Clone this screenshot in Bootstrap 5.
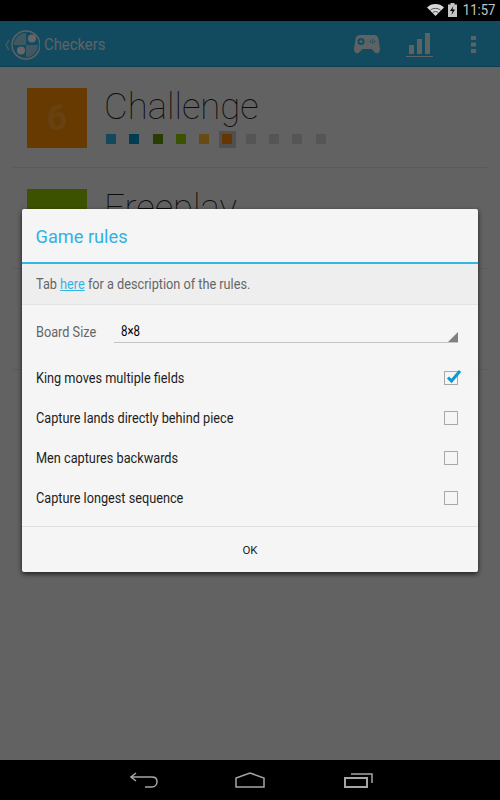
<!DOCTYPE html>
<html lang="en">
<head>
    <meta charset="UTF-8">
    <meta name="viewport" content="width=device-width, initial-scale=1.0">
    <title>Checkers</title>
    <link href="https://cdn.jsdelivr.net/npm/bootstrap@5.3.0/dist/css/bootstrap.min.css" rel="stylesheet">
    <style>
        html, body { height: 100%; }
        body { font-family: Roboto, "Liberation Sans", sans-serif; background: #000; overflow: hidden; }
        .app-shell { width: 500px; height: 800px; }
        .status-bar { height: 21px; padding-right: 5px; color: #c4c4c4; font-size: 15px; line-height: 21px; }
        .status-bar svg { margin-top: -2px; }
        .status-bar .clock { display: inline-block; margin-left: 1px; transform: scaleX(.87); transform-origin: right center; }
        .screen-area { height: 739px; background: #f6f6f6; }
        .action-bar { height: 46px; padding-top: 2px; background: #2fb9ef; border-bottom: 1px solid #1f9fd2; color: #e9f4f8; }
        .action-bar .logo-mark { margin-left: 5px; }
        .action-bar .app-title { display: inline-block; font-size: 16.5px; margin: 2px 0 0 4px; transform: scaleX(.9); transform-origin: left center; }
        .action-right { margin-left: auto; }
        .bars-icon { margin-left: 26px; }
        .more-icon { margin: 0 24px 0 38px; }
        .mode-row { height: 101px; padding: 21px 0 0 14px; margin: 0 13px; border-bottom: 1px solid #e2e2e2; }
        .mode-tile { width: 60px; height: 60px; font-size: 36px; font-weight: 700; color: rgba(255,255,255,.2); line-height: 60px; text-align: center; }
        .tile-orange { background: #ff9100; }
        .tile-green { background: #99cc00; }
        .mode-name { font-size: 36.5px; font-weight: 100; color: #222; line-height: 40px; margin-top: -1px; margin-left: 1px; }
        .level-strip { gap: 13.3px; margin-top: 7px; margin-left: 3px; }
        .level-dot { width: 10px; height: 10px; position: relative; }
        .level-now::before { content: ""; position: absolute; inset: -3px -4px -4px -3px; background: #c8c8c8; }
        .level-now::after { content: ""; position: absolute; inset: 0; background: #ff8800; }
        .screen-tail { height: 101px; margin: 0 13px; border-bottom: 1px solid #e2e2e2; }
        .dim-layer { position: absolute; inset: 0; background: rgba(0,0,0,.6); }
        .rules-dialog { width: 456px; height: 363px; background: #f5f5f5; position: relative; box-shadow: 0 2px 5px rgba(0,0,0,.7); border-radius: 2px; color: #1d1d1d; }
        .rules-head { height: 55px; border-bottom: 2px solid #33b5e5; color: #2fb2e6; font-size: 18.2px; padding: 15px 13.5px 0; line-height: 26px; }
        .rules-note { height: 41px; background: #eeeeee; border-bottom: 1px solid #e3e3e3; padding: 0 14px; line-height: 40px; color: #666; }
        .rules-note a { color: #33b5e5; }
        .narrow-text { display: inline-block; font-size: 15.5px; white-space: nowrap; transform: scaleX(.82); transform-origin: left center; }
        .size-row { height: 53px; padding: 0 20px 0 14px; }
        .size-label { flex: 0 0 78px; color: #666; padding-top: 2px; }
        .size-select { flex: 1; height: 22px; border-bottom: 1px solid #c4c4c4; position: relative; padding-left: 7px; line-height: 20px; }
        .size-select .narrow-text { font-size: 14px; color: #000; }
        .size-select::after { content: ""; position: absolute; right: 0; bottom: 0; border-style: solid; border-width: 0 0 10px 10px; border-color: transparent transparent #808080 transparent; }
        .rule-row { height: 40px; padding: 0 20px 0 14px; }
        .rule-row .narrow-text { padding-top: 2px; }
        .check-box { width: 14px; height: 14px; border: 1px solid #a9a9a9; position: relative; }
        .check-box svg { position: absolute; left: 1px; top: -4px; }
        .rules-foot { position: absolute; left: 0; right: 0; bottom: 0; height: 46px; border-top: 1px solid #dfdfdf; font-size: 11.5px; line-height: 47px; text-align: center; color: #222; }
        .soft-keys { height: 40px; padding-left: 4px; }
        .home-key { margin-left: 77px; }
        .recents-key { margin-left: 79px; }
    </style>
</head>
<body>
<div class="app-shell d-flex flex-column">
    <!-- status bar -->
    <div class="status-bar d-flex align-items-center justify-content-end">
        <svg width="17" height="12" viewBox="0 0 17 12">
            <path d="M8.500 12 0 3.400C2.300 1.200 5.200 0 8.500 0S14.700 1.200 17 3.400z" fill="#d8d8d8"/>
            <path d="M3.300 6.200C4.800 5 6.500 4.400 8.500 4.400s3.700.6 5.200 1.800M5.700 8.500c.8-.6 1.700-.9 2.800-.9s2 .3 2.800.9" fill="none" stroke="#000" stroke-width=".6"/>
        </svg>
        <svg class="ms-1" width="9" height="14" viewBox="0 0 9 14"><path d="M2.500 0h4v1.500H9V14H0V1.500h2.500z" fill="#c4c4c4"/><path d="M5.500 3 2 8h2.500l-1 4L7 6.500H4.500z" fill="#000"/></svg>
        <span class="clock">11:57</span>
    </div>

    <div class="screen-area position-relative">
        <div class="action-bar d-flex align-items-center">
            <svg class="logo-mark" width="35" height="32" viewBox="0 0 35 32">
                <path d="M4 11 1 16l3 5" fill="none" stroke="#e9f4f8" stroke-width="1.500" opacity=".6"/>
                <circle cx="21" cy="16" r="14" fill="none" stroke="#e9f4f8" stroke-width="1.500"/>
                <path d="M21 4A12 12 0 0 0 9 16h12zM21 28a12 12 0 0 0 12-12H21z" fill="#e9f4f8" opacity=".6"/>
                <circle cx="27" cy="9.500" r="4" fill="#fff"/>
                <circle cx="16" cy="21.500" r="4" fill="#fff"/>
            </svg>
            <span class="app-title">Checkers</span>
            <div class="action-right d-flex align-items-center">
                <svg width="26" height="19" viewBox="0 0 26 19">
                    <path fill-rule="evenodd" fill="#e9f4f8" d="M6 0h14c2.500 0 4 1.500 4.500 4L26 14c.3 3-2.500 5-4.500 4-1.500-.8-3-4-4.500-4H9c-1.500 0-3 3.200-4.500 4C2.500 19-.3 17 0 14L1.500 4C2 1.500 3.500 0 6 0zM7 3a3.500 3.500 0 1 0 0 7 3.500 3.500 0 0 0 0-7zm11.500 1-1 1 1 1 1-1zm0 3-1 1 1 1 1-1zm-2-1.500-1 1 1 1 1-1zm4 0-1 1 1 1 1-1z"/>
                    <path fill="#e9f4f8" d="M6.400 4.500h1.200v1.400H9v1.200H7.600v1.400H6.400V7.100H5V5.900h1.400z"/>
                </svg>
                <svg class="bars-icon" width="27" height="24" viewBox="0 0 27 24"><path fill="#e9f4f8" d="M3 12h5v9H3zM11 6h5v15h-5zM19 0h5v21h-5zM0 23h27v1H0z"/></svg>
                <svg class="more-icon" width="5" height="17" viewBox="0 0 5 17"><path fill="#e9f4f8" d="M0 0h5v4H0zM0 6.500h5v4H0zM0 13h5v4H0z"/></svg>
            </div>
        </div>

        <div class="mode-row d-flex gap-3">
            <div class="mode-tile tile-orange">6</div>
            <div>
                <div class="mode-name">Challenge</div>
                <div class="level-strip d-flex">
                    <div class="level-dot" style="background:#33b5e5"></div>
                    <div class="level-dot" style="background:#0099cc"></div>
                    <div class="level-dot" style="background:#669900"></div>
                    <div class="level-dot" style="background:#99cc00"></div>
                    <div class="level-dot" style="background:#ffbb33"></div>
                    <div class="level-dot level-now"></div>
                    <div class="level-dot" style="background:#d4d4d4"></div>
                    <div class="level-dot" style="background:#d4d4d4"></div>
                    <div class="level-dot" style="background:#d4d4d4"></div>
                    <div class="level-dot" style="background:#d4d4d4"></div>
                </div>
            </div>
        </div>
        <div class="mode-row d-flex gap-3">
            <div class="mode-tile tile-green"></div>
            <div class="mode-name">Freeplay</div>
        </div>
        <div class="screen-tail"></div>

        <div class="dim-layer d-flex align-items-center justify-content-center">
            <div class="rules-dialog">
                <div class="rules-head">Game rules</div>
                <div class="rules-note"><span class="narrow-text">Tab <a href="#">here</a> for a description of the rules.</span></div>
                <div class="size-row d-flex align-items-center">
                    <div class="size-label"><span class="narrow-text">Board Size</span></div>
                    <div class="size-select"><span class="narrow-text">8×8</span></div>
                </div>
                <div class="rule-row d-flex align-items-center justify-content-between">
                    <span class="narrow-text">King moves multiple fields</span>
                    <div class="check-box"><svg width="16" height="16" viewBox="0 0 16 16"><path d="M2 9.500 5.500 13 14 3" fill="none" stroke="#0a9ad2" stroke-width="3"/></svg></div>
                </div>
                <div class="rule-row d-flex align-items-center justify-content-between">
                    <span class="narrow-text">Capture lands directly behind piece</span>
                    <div class="check-box"></div>
                </div>
                <div class="rule-row d-flex align-items-center justify-content-between">
                    <span class="narrow-text">Men captures backwards</span>
                    <div class="check-box"></div>
                </div>
                <div class="rule-row d-flex align-items-center justify-content-between">
                    <span class="narrow-text">Capture longest sequence</span>
                    <div class="check-box"></div>
                </div>
                <div class="rules-foot">OK</div>
            </div>
        </div>
    </div>

    <!-- soft keys -->
    <div class="soft-keys d-flex align-items-center justify-content-center">
        <svg width="28" height="16" viewBox="0 0 28 16"><path d="M6 1 1 5l5 4M1 5h21c3 0 5 1.500 5 4.500S25 15 22 15h-7" fill="none" stroke="#a6a6a6" stroke-width="1.500"/></svg>
        <svg class="home-key" width="30" height="16" viewBox="0 0 30 16"><path d="M1 15V6l14-5 14 5v9z" fill="none" stroke="#a6a6a6" stroke-width="1.500"/></svg>
        <svg class="recents-key" width="30" height="16" viewBox="0 0 30 16"><path d="M1 6h22v9H1z" fill="none" stroke="#a6a6a6" stroke-width="2"/><path d="M7 2h21v9" fill="none" stroke="#a6a6a6" stroke-width="1.500"/></svg>
    </div>
</div>
<script src="https://cdn.jsdelivr.net/npm/bootstrap@5.3.0/dist/js/bootstrap.bundle.min.js"></script>
</body>
</html>
